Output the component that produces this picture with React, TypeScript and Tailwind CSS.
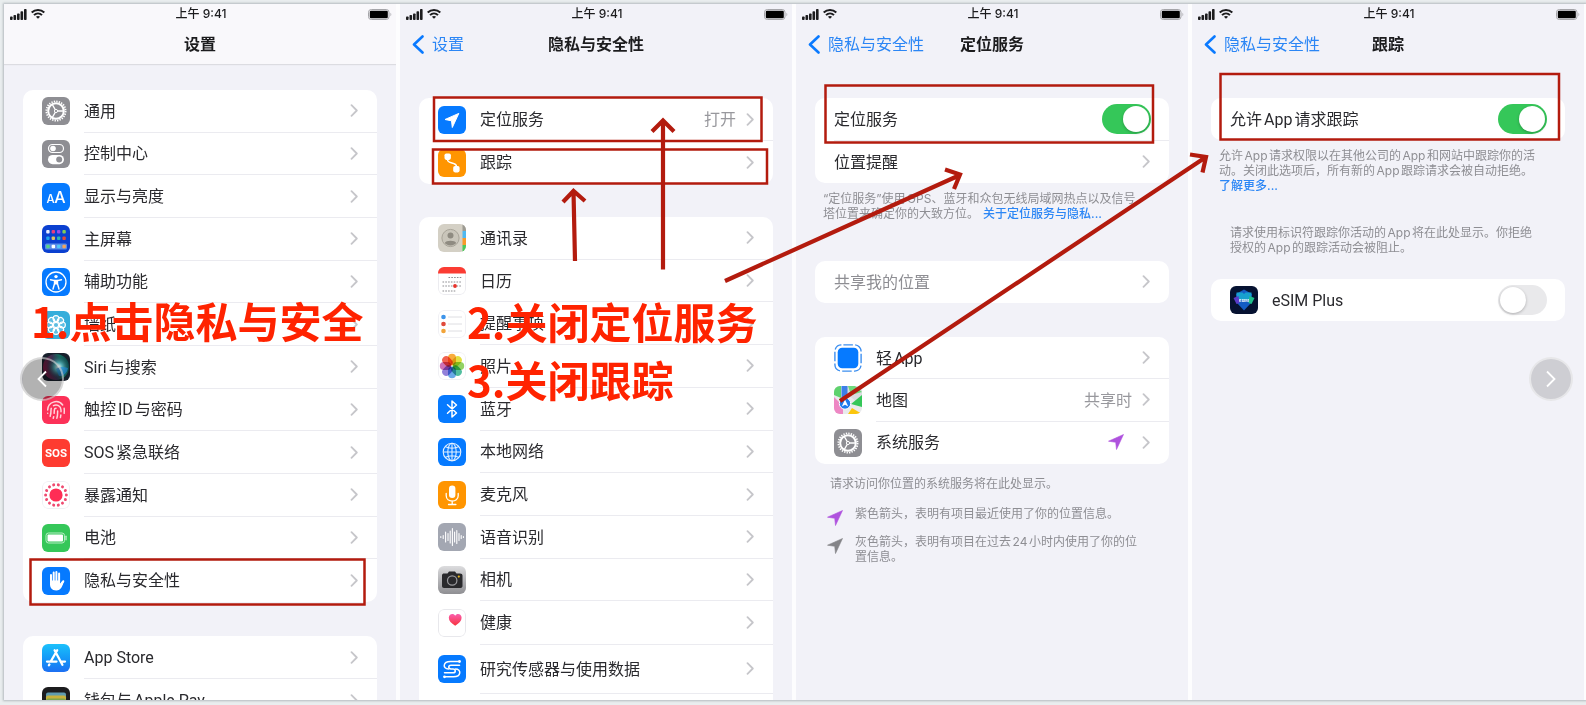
import type {ReactNode} from "react";
import {Fingerprint} from "lucide-react";

type RowData = {
    label: string;
    icon?: ReactNode;
    value?: ReactNode;
    muted?: boolean;
};

const Tile = ({ bg, children }: { bg: string; children: ReactNode }) => (
    <svg viewBox="0 0 28 28" className={`size-7 shrink-0 rounded-[6px] ${bg}`} aria-hidden="true">
        {children}
    </svg>
);

const range = (n: number) => Array.from({ length: n }, (_, i) => i);

const GearIcon = () => (
    <Tile bg="bg-[#8e8e93]">
        <g fill="none" stroke="#fff">
            <circle cx="14" cy="14" r="9.6" strokeWidth="1.8" strokeDasharray="1.35 1.163"/>
            <circle cx="14" cy="14" r="7.8" strokeWidth="2"/>
            <path d="M14 14h7M14 14l-3.6-6.4M14 14l-3.6 6.4" strokeWidth="1.3"/>
            <circle cx="14" cy="14" r="1.6" strokeWidth="1" fill="#8e8e93"/>
        </g>
    </Tile>
);

const ControlIcon = () => (
    <Tile bg="bg-[#8e8e93]">
        <rect x="6.5" y="4.5" width="15" height="8" rx="4" fill="none" stroke="#fff" strokeWidth="1.2"/>
        <circle cx="11" cy="8.5" r="2.8" fill="#fff"/>
        <rect x="6" y="15" width="16" height="9.2" rx="4.6" fill="#fff"/>
        <circle cx="17.2" cy="19.6" r="3" fill="#8e8e93"/>
    </Tile>
);

const DisplayIcon = () => (
    <Tile bg="bg-[#067aff]">
        <g fill="#fff" fontFamily="Inter, 'Liberation Sans', sans-serif" fontWeight="500">
            <text x="4.5" y="20" fontSize="11.5">A</text>
            <text x="12.3" y="20" fontSize="16">A</text>
        </g>
    </Tile>
);

const homeColors = [
    "#e8ecff", "#e83d7f", "#9a4bea", "#7fcb5a",
    "#1fa2e8", "#e0c060", "#2fb6b0", "#e2483c",
];

const HomeIcon = () => (
    <Tile bg="bg-[#0b40d0]">
        {homeColors.slice(0, 4).map((c, i) => <rect key={c} x={4.2 + i * 5.4} y="5" width="3.4" height="3.4" rx="1" fill={c}/>)}
        {homeColors.slice(4).map((c, i) => <rect key={c} x={4.2 + i * 5.4} y="11.6" width="3.4" height="3.4" rx="1" fill={c}/>)}
        <rect x="3" y="18.6" width="22" height="6" rx="1.5" fill="#5a8be8"/>
        {["#57d08a", "#ffffff", "#52c8f5", "#f2a35a"].map((c, i) => (
            <rect key={c} x={4.2 + i * 5.4} y="19.8" width="3.5" height="3.5" rx="1" fill={c}/>
        ))}
    </Tile>
);

const AccessIcon = () => (
    <Tile bg="bg-[#067aff]">
        <circle cx="14" cy="14" r="10" fill="none" stroke="#fff" strokeWidth="1.3"/>
        <circle cx="14" cy="8.6" r="1.7" fill="#fff"/>
        <path d="M8.5 11.7l4 .9v3.2l-1.5 5.2M19.5 11.7l-4 .9v3.2l1.5 5.2" fill="none" stroke="#fff" strokeWidth="1.4" strokeLinecap="round"/>
        <path d="M12.2 11.8h3.6v4.8h-3.6z" fill="#fff"/>
    </Tile>
);

const WallpaperIcon = () => (
    <Tile bg="bg-[#36aedb]">
        <g fill="#fff" fillOpacity=".2" stroke="#fff" strokeWidth="1.1">
            {range(8).map(i => <circle key={i} cx="14" cy="7.6" r="3" transform={`rotate(${i * 45} 14 14)`}/>)}
            <circle cx="14" cy="14" r="2.6"/>
        </g>
    </Tile>
);

const SiriIcon = () => (
    <Tile bg="bg-[#17202c]">
        <defs>
            <radialGradient id="siriA" cx=".6" cy=".5" r=".5">
                <stop offset="0" stopColor="#e8f7f7"/>
                <stop offset=".35" stopColor="#4fa8b0"/>
                <stop offset="1" stopColor="#17303f" stopOpacity="0"/>
            </radialGradient>
            <linearGradient id="siriB" x1="0" y1=".6" x2="1" y2=".4">
                <stop offset="0" stopColor="#7a1640"/>
                <stop offset=".45" stopColor="#3a3352"/>
                <stop offset=".7" stopColor="#12705f"/>
                <stop offset="1" stopColor="#0b4a4c"/>
            </linearGradient>
        </defs>
        <circle cx="14" cy="14" r="13" fill="url(#siriB)"/>
        <circle cx="14" cy="14" r="12" fill="url(#siriA)"/>
        <path d="M14 16c4-3 8-2 12-1-1 5-5 9-9 8z" fill="#1f8be0" fillOpacity=".6"/>
    </Tile>
);

const TouchIcon = () => (
    <Tile bg="bg-[#fc3158]">
        <Fingerprint x="4" y="4" width={20} height={20} color="#ffd3da" strokeWidth={1.8}/>
    </Tile>
);

const SosIcon = () => (
    <Tile bg="bg-[#fe3b30]">
        <text x="14" y="18" textAnchor="middle" fontSize="11.5" fontWeight="700" fill="#fff"
              fontFamily="Roboto, 'Liberation Sans', sans-serif">SOS</text>
    </Tile>
);

const ExposureIcon = () => (
    <Tile bg="bg-white">
        <rect x=".5" y=".5" width="27" height="27" rx="5.5" fill="none" stroke="#f0f0f4"/>
        <circle cx="14" cy="14" r="6.6" fill="#ff2d55"/>
        {range(14).map(i => (
            <circle key={i} cx="14" cy="3.6" r="1.5" fill="#ef4a70" transform={`rotate(${i * 25.7 + 13} 14 14)`}/>
        ))}
    </Tile>
);

const BatteryIcon = () => (
    <Tile bg="bg-[#35c759]">
        <rect x="4" y="9" width="18.5" height="10" rx="2.5" fill="none" stroke="#b6ecc4"/>
        <rect x="5.5" y="10.5" width="15.5" height="7" rx="1" fill="#fff"/>
        <path d="M24 12.3v3.4" stroke="#b6ecc4" strokeWidth="1.4" strokeLinecap="round"/>
    </Tile>
);

const HandIcon = () => (
    <Tile bg="bg-[#067aff]">
        <g stroke="#fff" strokeWidth="2" strokeLinecap="round" fill="none">
            <path d="M9 15V8M11.7 14V5.6M14.4 14V5M17.1 14V6.6"/>
            <path d="M18.5 18.5l2.7-4.2" strokeWidth="2.2"/>
        </g>
        <path d="M8 13.5h10.1v3.2l2.2-2.6 1.4.7c-1.2 4.2-2.6 8.7-7.4 8.7C9.6 23.5 8 20.5 8 17z" fill="#fff"/>
    </Tile>
);

const AppStoreIcon = () => (
    <Tile bg="bg-linear-to-b from-[#1dc1fb] to-[#1d6ff2]">
        <g stroke="#fff" strokeWidth="2.3" strokeLinecap="round" fill="none">
            <path d="M15.2 6.2L8.7 17.5M12.6 6.2l7.8 14.6M5 17.6h9.5M18.5 17.6H23M7.4 20.4l-.5.9"/>
        </g>
    </Tile>
);

const WalletIcon = () => (
    <Tile bg="bg-[#1c1c1e]">
        <rect x="4" y="5.5" width="20" height="18" rx="2" fill="#5f9cb0"/>
        <rect x="4" y="8.5" width="20" height="15" rx="2" fill="#c9b13a"/>
        <rect x="4" y="11.5" width="20" height="12" rx="2" fill="#7da54c"/>
        <rect x="4" y="13.5" width="20" height="10" rx="2" fill="#e8694f"/>
    </Tile>
);

const LocationIcon = () => (
    <Tile bg="bg-[#067aff]">
        <path d="M20.8 7.4L7 13.5l6.5 1.3.8 6.7z" fill="#fff" stroke="#fff" strokeWidth="1" strokeLinejoin="round"/>
    </Tile>
);

const TrackingIcon = () => (
    <Tile bg="bg-[#ff9501]">
        <path d="M9.5 8.5v2c0 5 9 2 9 7v2" fill="none" stroke="#fff" strokeWidth="1.4"/>
        <rect x="6.5" y="4.5" width="6.4" height="6.4" rx="1.8" fill="#fff"/>
        <rect x="15.2" y="17" width="6.4" height="6.4" rx="1.8" fill="#fff"/>
    </Tile>
);

const ContactsIcon = () => (
    <Tile bg="bg-[#d4d0c5]">
        <path d="M24.5 0H28v7h-3.5z" fill="#9c9a92"/>
        <path d="M24.5 7H28v7h-3.5z" fill="#4fb8f0"/>
        <path d="M24.5 14H28v7h-3.5z" fill="#f79a2b"/>
        <path d="M24.5 21H28v7h-3.5z" fill="#4cc95c"/>
        <circle cx="12.5" cy="14" r="8.6" fill="#c9c5ba" stroke="#a8a499"/>
        <circle cx="12.5" cy="11.5" r="3" fill="#8f8b81"/>
        <path d="M6.8 19c1-3 10.4-3 11.4 0-2.5 3.2-8.9 3.2-11.4 0z" fill="#8f8b81"/>
    </Tile>
);

const CalendarIcon = () => (
    <Tile bg="bg-white">
        <rect x=".5" y=".5" width="27" height="27" rx="5.5" fill="none" stroke="#ececf0"/>
        <path d="M0 0h28v6.5H0z" fill="#fb3c33"/>
        <g stroke="#8c8c90" strokeWidth="1.1" strokeDasharray="1.6 1.2">
            <path d="M10.5 10.5h13M4.5 15h19M4.5 19h19M4.5 24h13"/>
        </g>
        <circle cx="17" cy="19" r="1.9" fill="#e8332b"/>
    </Tile>
);

const RemindersIcon = () => (
    <Tile bg="bg-white">
        <rect x=".5" y=".5" width="27" height="27" rx="5.5" fill="none" stroke="#f0f0f4"/>
        <path d="M10 7h14M10 14h14M10 21h14" stroke="#dedee2"/>
        <circle cx="5.5" cy="7" r="2.3" fill="#3d94ea"/>
        <circle cx="5.5" cy="14" r="2.3" fill="#e04a3c"/>
        <circle cx="5.5" cy="21" r="2.3" fill="#f2a43a"/>
    </Tile>
);

const petals = ["#f8a427", "#e0dc2e", "#86cc52", "#3fb795", "#5aa0e6", "#8673d6", "#c963ae", "#f0503c"];

const PhotosIcon = () => (
    <Tile bg="bg-white">
        <rect x=".5" y=".5" width="27" height="27" rx="5.5" fill="none" stroke="#f0f0f4"/>
        {petals.map((c, i) => (
            <rect key={c} x="10" y="1.8" width="8" height="11.4" rx="4" fill={c} fillOpacity=".9"
                  className="mix-blend-multiply" transform={`rotate(${i * 45} 14 14)`}/>
        ))}
    </Tile>
);

const BluetoothIcon = () => (
    <Tile bg="bg-[#067aff]">
        <path d="M9.5 9.8l9 8.2-4.5 4V6l4.5 4-9 8.2" fill="none" stroke="#fff" strokeWidth="1.5" strokeLinejoin="round" strokeLinecap="round"/>
    </Tile>
);

const NetworkIcon = () => (
    <Tile bg="bg-[#067aff]">
        <g fill="none" stroke="#e4f1ff" strokeWidth="1.1">
            <circle cx="14" cy="14" r="8.8"/>
            <ellipse cx="14" cy="14" rx="4.2" ry="8.8"/>
            <path d="M14 5.2v17.6M5.2 14h17.6M7 8.6c4 2.2 10 2.2 14 0M7 19.4c4-2.2 10-2.2 14 0"/>
        </g>
    </Tile>
);

const MicIcon = () => (
    <Tile bg="bg-[#ff9501]">
        <rect x="11" y="4.5" width="6.4" height="12.5" rx="3.2" fill="#fff"/>
        <path d="M8.2 12.5v2.3c0 7 12 7 12 0v-2.3M14.2 20v3.3M10.5 23.5h7.4" fill="none" stroke="#fff" strokeWidth="1.3" strokeLinecap="round"/>
    </Tile>
);

const SpeechIcon = () => (
    <Tile bg="bg-[#a3a7b2]">
        <path d="M2.8 13.5v1M5.2 12.5v3M7.6 9v10M10 10.5v7M12.2 8v12M14.4 5.5v17M16.6 9v10M18.8 7.5v13M21 10.5v7M23.2 12.5v3M25.4 13.5v1"
              stroke="#fff" strokeWidth="1.1" strokeLinecap="round"/>
    </Tile>
);

const CameraIcon = () => (
    <Tile bg="bg-linear-to-b from-[#dcdcde] to-[#8f8f93]">
        <path d="M4 9.5C4 8 5 7.5 6 7.5h3.5l1.5-2h6l1.5 2H22c1.5 0 2.5.7 2.5 2V20c0 1.2-.8 2-2 2H6c-1.2 0-2-.8-2-2z" fill="#29292c"/>
        <circle cx="14.2" cy="14.5" r="4.7" fill="#29292c" stroke="#9a9a9e" strokeWidth="1.2"/>
        <circle cx="20.8" cy="10.6" r="1.1" fill="#e8b820"/>
    </Tile>
);

const HealthIcon = () => (
    <Tile bg="bg-white">
        <defs>
            <linearGradient id="heart" x1="0" y1="0" x2="0" y2="1">
                <stop offset="0" stopColor="#fb5fae"/>
                <stop offset="1" stopColor="#f7323c"/>
            </linearGradient>
        </defs>
        <rect x=".5" y=".5" width="27" height="27" rx="5.5" fill="none" stroke="#e8e8ec"/>
        <path d="M17.2 16.8c-4-2.6-6.4-5-6.4-8 0-2.2 1.6-3.8 3.5-3.8 1.3 0 2.3.7 2.9 1.7.6-1 1.6-1.7 2.9-1.7 1.9 0 3.5 1.6 3.5 3.8 0 3-2.4 5.4-6.4 8z" fill="url(#heart)"/>
    </Tile>
);

const ResearchIcon = () => (
    <Tile bg="bg-[#067aff]">
        <g fill="none" stroke="#fff" strokeWidth="1.5" strokeLinecap="round">
            <path d="M21.5 6.5h-9c-8 0-8 7.5-2 7.5"/>
            <path d="M21.5 10.2H13c-3 0-3 3.8 0 3.8h2c3 0 3 3.8 0 3.8H6.5"/>
            <path d="M6.5 21.8h9c8 0 8-7.8 2-7.8"/>
        </g>
        <circle cx="21.5" cy="6.5" r="1.4" fill="#fff"/>
        <circle cx="6.5" cy="21.8" r="1.4" fill="#fff"/>
    </Tile>
);

const ClipIcon = () => (
    <Tile bg="bg-white">
        <rect x=".9" y=".9" width="26.2" height="26.2" rx="6.5" fill="none" stroke="#3d8ff0" strokeWidth="1.4" strokeDasharray="9.5 2.3" strokeDashoffset="-2"/>
        <rect x="3.7" y="3.7" width="20.6" height="20.6" rx="4.5" fill="#067aff"/>
    </Tile>
);

const MapsIcon = () => (
    <Tile bg="bg-[#e9eaec]">
        <path d="M0 0h7v12L0 9z" fill="#5ed26d"/>
        <path d="M13 0h15v20L13 8z" fill="#d9dcdf"/>
        <path d="M14 0h7l7 6v0L17 9z" fill="#6fd97c"/>
        <path d="M28 9v12l-11-3z" fill="#35c759"/>
        <path d="M0 11l9 9v8H0z" fill="#ee87c4"/>
        <path d="M14 28l4-6 10 6z" fill="#fbc60e"/>
        <path d="M7.5 0h6v14h-6z" fill="#3c7fe8"/>
        <circle cx="11" cy="17.5" r="5.7" fill="#1f7bee" stroke="#fff"/>
        <path d="M11 13.6l3.2 6.8-3.2-1.6-3.2 1.6z" fill="#fff"/>
    </Tile>
);

const EsimIcon = () => (
    <Tile bg="bg-[#061231]">
        <path d="M6 8l8-4.5L22 8l-1 9-7 7.5L7 17z" fill="#145cc4"/>
        <path d="M6.5 6.5h6L14 8l1.5-1.5h6L21 14H7z" fill="#17a0cf"/>
        <path d="M3.5 12l5-2 1 7-3 1z" fill="#5a3bc8"/>
        <path d="M24.5 12l-5-2-1 7 3 1z" fill="#1fbf8a"/>
        <text x="14" y="15.5" textAnchor="middle" fontSize="4" fontWeight="700" fill="#fff" fontFamily="Inter, sans-serif">eSIM</text>
    </Tile>
);

const Chevron = () => (
    <svg viewBox="0 0 8 13" className="w-2 h-[13px] shrink-0" fill="none" stroke="#c6c6ca" strokeWidth="1.8" aria-hidden="true">
        <path d="M1.5 1.2l5.300 5.300-5.300 5.300" strokeLinecap="round" strokeLinejoin="round"/>
    </svg>
);

const LocationArrow = ({ color }: { color: string }) => (
    <svg viewBox="0 0 16 16" className="size-4 shrink-0" aria-hidden="true">
        <path d="M15.5.5L.5 7.2l7.2 1.1.8 7.200z" fill={color} stroke={color} strokeWidth=".6" strokeLinejoin="round"/>
    </svg>
);

const StatusBar = () => (
    <div className="grid grid-cols-3 items-center h-5 pl-1.5 pr-1">
        <div className="flex items-center gap-1">
            <svg viewBox="0 0 17 11" className="w-[17px] h-[11px]" fill="#1c1c1e" aria-hidden="true">
                <rect x="0" y="7.5" width="2.6" height="3.5" rx=".8"/>
                <rect x="3.5" y="6" width="2.6" height="5" rx=".8"/>
                <rect x="7" y="4.5" width="2.6" height="6.5" rx=".8"/>
                <rect x="10.5" y="2.2" width="2.6" height="8.8" rx=".8"/>
                <rect x="14" y="0" width="2.6" height="11" rx=".8"/>
            </svg>
            <svg viewBox="0 0 14 10" className="w-3.5 h-2.5" fill="none" stroke="#1c1c1e" strokeWidth="2" aria-hidden="true">
                <path d="M.7 3.6c3.6-3.4 9-3.4 12.600 0M3 6.100c2.300-2.200 5.700-2.200 8 0"/>
                <path d="M7 9.800L4.900 7.700c1.200-1 3-1 4.200 0z" fill="#1c1c1e" stroke="none"/>
            </svg>
        </div>
        <span className="text-center text-xs font-medium text-[#1c1c1e]">上午 9:41</span>
        <svg viewBox="0 0 24 11" className="w-6 h-[11px] justify-self-end" aria-hidden="true">
            <rect x=".5" y=".5" width="20.5" height="10" rx="2.8" fill="none" stroke="#a5a5a9"/>
            <rect x="1.8" y="1.8" width="18" height="7.4" rx="1.3" fill="#000"/>
            <path d="M22.5 3.8c1 .4 1 3 0 3.400z" fill="#a5a5a9"/>
        </svg>
    </div>
);

const Screen = ({ title, back, children }: { title: string; back?: string; children: ReactNode }) => (
    <section className="flex-1 min-w-0 overflow-hidden bg-[#f2f2f8]">
        <header className={`h-15 ${back ? '' : 'bg-[#f9f8fb] shadow-[0_1px_1px_#dcdce1]'}`}>
            <StatusBar/>
            <div className="grid grid-cols-[1fr_auto_1fr] items-center h-10 px-3">
                {back ? (
                    <a href="#back" className="flex items-center gap-2 text-base text-[#2b86f5]">
                        <svg viewBox="0 0 12 19" className="w-3 h-[19px]" fill="none" stroke="#0a7aff" strokeWidth="2.6" aria-hidden="true">
                            <path d="M10.5 1.5L2 9.5l8.5 8" strokeLinecap="round" strokeLinejoin="round"/>
                        </svg>
                        {back}
                    </a>
                ) : <span/>}
                <h2 className="text-base font-bold text-[#1c1c1e]">{title}</h2>
            </div>
        </header>
        {children}
    </section>
);

const Row = ({ label, icon, value, muted }: RowData) => (
    <a href="#row" className="group flex items-center gap-3.5 pl-[19px]">
        {icon}
        <span className="flex flex-1 items-center self-stretch gap-2.5 pr-[19px] border-b border-[#ebebf0] group-last:border-transparent">
            <span className={`flex-1 pt-0.5 text-base font-['Roboto','Noto_Sans_CJK_SC',sans-serif] ${muted ? 'text-[#8e8e93]' : 'text-[#2a2a2e]'}`}>{label}</span>
            {value}
            <Chevron/>
        </span>
    </a>
);

const Group = ({ rows, className }: { rows: RowData[]; className: string }) => (
    <div className={`mx-[19px] grid auto-rows-fr bg-white overflow-hidden ${className}`}>
        {rows.map(row => <Row key={row.label} {...row}/>)}
    </div>
);

const ToggleRow = ({ id, label, icon, checked }: { id: string; label: string; icon?: ReactNode; checked?: boolean }) => (
    <div className="flex items-center gap-3.5 h-[42px] pl-[19px] pr-[18px]">
        {icon}
        <label htmlFor={id} className="flex-1 pt-0.5 text-base font-['Roboto','Noto_Sans_CJK_SC',sans-serif] text-[#2a2a2e]">{label}</label>
        <input
            id={id}
            type="checkbox"
            defaultChecked={checked}
            className="appearance-none flex items-center w-[49px] h-[30px] px-0.5 rounded-full bg-[#e9e9eb] checked:bg-[#35c759] checked:justify-end before:block before:size-[26px] before:rounded-full before:bg-white before:shadow-[0_1px_3px_#00000040]"
        />
    </div>
);

const mainRows: RowData[] = [
    { label: "通用", icon: <GearIcon/> },
    { label: "控制中心", icon: <ControlIcon/> },
    { label: "显示与亮度", icon: <DisplayIcon/> },
    { label: "主屏幕", icon: <HomeIcon/> },
    { label: "辅助功能", icon: <AccessIcon/> },
    { label: "墙纸", icon: <WallpaperIcon/> },
    { label: "Siri与搜索", icon: <SiriIcon/> },
    { label: "触控ID与密码", icon: <TouchIcon/> },
    { label: "SOS紧急联络", icon: <SosIcon/> },
    { label: "暴露通知", icon: <ExposureIcon/> },
    { label: "电池", icon: <BatteryIcon/> },
    { label: "隐私与安全性", icon: <HandIcon/> },
];

const storeRows: RowData[] = [
    { label: "App Store", icon: <AppStoreIcon/> },
    { label: "钱包与Apple Pay", icon: <WalletIcon/> },
];

const privacyRows: RowData[] = [
    { label: "定位服务", icon: <LocationIcon/>, value: <span className="text-base text-[#98989d]">打开</span> },
    { label: "跟踪", icon: <TrackingIcon/> },
];

const permissionRows: RowData[] = [
    { label: "通讯录", icon: <ContactsIcon/> },
    { label: "日历", icon: <CalendarIcon/> },
    { label: "提醒事项", icon: <RemindersIcon/> },
    { label: "照片", icon: <PhotosIcon/> },
    { label: "蓝牙", icon: <BluetoothIcon/> },
    { label: "本地网络", icon: <NetworkIcon/> },
    { label: "麦克风", icon: <MicIcon/> },
    { label: "语音识别", icon: <SpeechIcon/> },
    { label: "相机", icon: <CameraIcon/> },
    { label: "健康", icon: <HealthIcon/> },
];

const locationRows: RowData[] = [
    { label: "轻App", icon: <ClipIcon/> },
    { label: "地图", icon: <MapsIcon/>, value: <span className="text-base text-[#98989d]">共享时</span> },
    { label: "系统服务", icon: <GearIcon/>, value: <span className="pr-2"><LocationArrow color="#af52de"/></span> },
];

// red frames and arrows drawn over the four screens
const Marks = () => (
    <svg viewBox="0 0 1586 705" className="absolute inset-0 w-full h-full pointer-events-none" fill="none" stroke="#b31b0e" aria-hidden="true">
        <g strokeWidth="2.5">
            <rect x="30.5" y="559.5" width="334" height="45"/>
            <rect x="434" y="97.5" width="327.5" height="43.5"/>
            <rect x="433" y="149.5" width="334" height="34"/>
            <rect x="825.5" y="85.5" width="327.5" height="57"/>
            <rect x="1220.5" y="74" width="338.5" height="65.5"/>
        </g>
        <g strokeWidth="4.2">
            <path d="M575 261l-1.500-70M563 202l10.500-11L585 201"/>
            <path d="M663 269.500V120M652 131.500l11-11 11 11"/>
            <path d="M725 281l235-106M945 169.500l15 5-6 14.500"/>
            <path d="M840 401l366-244M1190 154.500l16 2.500-3.500 15.500"/>
        </g>
    </svg>
);

const App = () => {
    return (
        <main className="relative h-screen overflow-hidden bg-[#e9edee] pt-1 pl-1 pb-[5px] font-['Inter','Noto_Sans_CJK_SC',sans-serif] [text-autospace:normal]">
            <div className="flex gap-1 h-full pr-0.5 bg-[#fdfdfe] shadow-[0_0_2px_1px_#b4babf]">
                <Screen title="设置">
                    <Group rows={mainRows} className="mt-[26px] h-[512px] rounded-[10px]"/>
                    <Group rows={storeRows} className="mt-[34px] h-[86px] rounded-t-[10px]"/>
                </Screen>

                <Screen title="隐私与安全性" back="设置">
                    <Group rows={privacyRows} className="mt-[34px] h-[86px] rounded-[10px]"/>
                    <Group rows={permissionRows} className="mt-[33px] h-[427px] rounded-t-[10px]"/>
                    <div className="mx-[19px] bg-white">
                        <div className="ml-[61px] h-px bg-[#ebebf0]"/>
                        <div className="grid h-12">
                            <Row label="研究传感器与使用数据" icon={<ResearchIcon/>}/>
                        </div>
                        <div className="ml-[61px] h-3 border-t border-[#ebebf0]"/>
                    </div>
                </Screen>

                <Screen title="定位服务" back="隐私与安全性">
                    <div className="mt-[34px] mx-[19px] rounded-[10px] bg-white">
                        <ToggleRow id="location" label="定位服务" checked/>
                        <div className="ml-[19px] h-px bg-[#ebebf0]"/>
                        <div className="grid h-[42px]">
                            <Row label="位置提醒"/>
                        </div>
                    </div>
                    <p className="mt-2 ml-[27px] text-xs leading-[15px] text-[#8e8e93]">
                        “定位服务”使用GPS、蓝牙和众包无线局域网热点以及信号<br/>
                        塔位置来确定你的大致方位。
                        <a href="#about" className="ml-1 text-[#2b86f5] font-medium">关于定位服务与隐私...</a>
                    </p>
                    <Group rows={[{ label: "共享我的位置", muted: true }]} className="mt-10 h-[42px] rounded-[10px]"/>
                    <Group rows={locationRows} className="mt-[34px] h-[127px] rounded-[10px]"/>
                    <p className="mt-3 ml-[34px] text-xs leading-[15px] text-[#8e8e93]">请求访问你位置的系统服务将在此处显示。</p>
                    <div className="flex gap-3 mt-[15px] ml-[31px] text-xs leading-[15px] text-[#8e8e93]">
                        <div className="pt-1"><LocationArrow color="#af52de"/></div>
                        <p>紫色箭头，表明有项目最近使用了你的位置信息。</p>
                    </div>
                    <div className="flex gap-3 mt-2 ml-[31px] text-xs leading-[15px] text-[#8e8e93]">
                        <div className="pt-1"><LocationArrow color="#848488"/></div>
                        <p>灰色箭头，表明有项目在过去24小时内使用了你的位<br/>置信息。</p>
                    </div>
                </Screen>

                <Screen title="跟踪" back="隐私与安全性">
                    <div className="mt-[34px] mx-[19px] rounded-[10px] bg-white">
                        <ToggleRow id="tracking" label="允许App请求跟踪" checked/>
                    </div>
                    <p className="mt-2 ml-[27px] text-xs leading-[15px] text-[#8e8e93]">
                        允许App请求权限以在其他公司的App和网站中跟踪你的活<br/>
                        动。关闭此选项后，所有新的App跟踪请求会被自动拒绝。<br/>
                        <a href="#more" className="text-[#2b86f5] font-medium">了解更多...</a>
                    </p>
                    <p className="mt-8 ml-[38px] text-xs leading-[15px] text-[#8e8e93]">
                        请求使用标识符跟踪你活动的App将在此处显示。你拒绝<br/>
                        授权的App的跟踪活动会被阻止。
                    </p>
                    <div className="mt-6 mx-[19px] rounded-[10px] bg-white">
                        <ToggleRow id="esim" label="eSIM Plus" icon={<EsimIcon/>}/>
                    </div>
                </Screen>
            </div>

            <Marks/>
            <p className="absolute left-[31px] top-[291px] text-[42px] leading-[58px] font-bold text-[#ff2300] font-['Noto_Sans_CJK_SC',sans-serif] whitespace-nowrap">
                1.点击隐私与安全
            </p>
            <p className="absolute left-[467px] top-[292px] text-[42px] leading-[58px] font-bold text-[#ff2300] font-['Noto_Sans_CJK_SC',sans-serif] whitespace-nowrap">
                2.关闭定位服务<br/>3.关闭跟踪
            </p>

            <button aria-label="上一张" className="absolute left-5 top-[357px] grid place-items-center size-11 rounded-full border-2 border-white/50 bg-black/30">
                <svg viewBox="0 0 10 18" className="w-2.5 h-[18px]" fill="none" stroke="#fff" strokeWidth="1.8">
                    <path d="M9 1.5L1.5 9 9 16.5"/>
                </svg>
            </button>
            <button aria-label="下一张" className="absolute right-[13px] top-[357px] grid place-items-center size-11 rounded-full border-2 border-white/50 bg-black/15">
                <svg viewBox="0 0 10 18" className="w-2.5 h-[18px]" fill="none" stroke="#fff" strokeWidth="1.8">
                    <path d="M1 1.5L8.5 9 1 16.5"/>
                </svg>
            </button>
        </main>
    );
};

export default App;
